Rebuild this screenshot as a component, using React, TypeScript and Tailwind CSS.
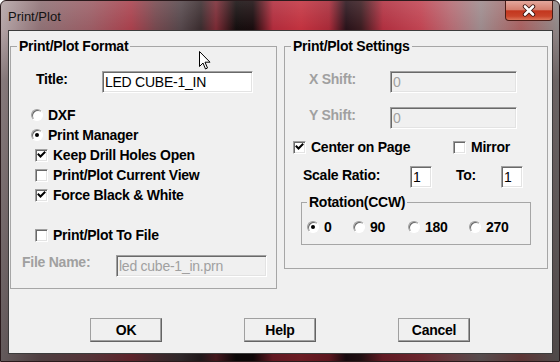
import React from "react"

function Check({ checked }: { checked?: boolean }) {
  return (
    <div className="w-[13px] h-[13px] shrink-0 flex items-center justify-center bg-white border border-[#a0a0a0] border-r-white border-b-white shadow-[inset_1px_1px_0_#696969,inset_-1px_-1px_0_#e3e3e3]">
      {checked && (
        <svg width="11" height="11" viewBox="0 0 11 11">
          <path d="M2.5 4.5 L4.5 6.5 L8.5 2.5" fill="none" stroke="#000" strokeWidth="2" strokeLinecap="square" />
        </svg>
      )}
    </div>
  )
}

function Radio({ checked }: { checked?: boolean }) {
  return (
    <div className="w-[12px] h-[12px] shrink-0 rounded-full flex items-center justify-center bg-white border border-[#a0a0a0] border-r-white border-b-white shadow-[inset_1px_1px_0_#696969]">
      {checked && <div className="w-[4px] h-[4px] rounded-full bg-black"></div>}
    </div>
  )
}

function TextBox({ className, disabled, children }: { className: string; disabled?: boolean; children: React.ReactNode }) {
  return (
    <div
      className={`h-[22px] shrink-0 flex items-center pl-[2px] font-normal border border-[#a0a0a0] border-r-white border-b-white shadow-[inset_1px_1px_0_#696969,inset_-1px_-1px_0_#e3e3e3] ${
        disabled ? "bg-[#f0f0f0] text-[#a0a0a0]" : "bg-white text-black"
      } ${className}`}
    >
      {children}
    </div>
  )
}

function CheckRow({ label, checked, className }: { label: string; checked?: boolean; className: string }) {
  return (
    <div className={`h-[20px] flex items-center gap-[5px] ${className}`}>
      <Check checked={checked} />
      <span>{label}</span>
    </div>
  )
}

function RadioRow({ label, checked, className }: { label: string; checked?: boolean; className: string }) {
  return (
    <div className={`h-[20px] flex items-center gap-[5px] ${className}`}>
      <Radio checked={checked} />
      <span>{label}</span>
    </div>
  )
}

function Button({ children }: { children: React.ReactNode }) {
  return (
    <div className="w-[72px] h-[24px] flex items-center justify-center bg-[#f0f0f0] border border-[#a0a0a0] border-r-[#646464] border-b-[#646464] shadow-[inset_-1px_-1px_0_#a0a0a0]">
      {children}
    </div>
  )
}

export default function App() {
  return (
    <div className="relative w-[560px] h-[362px] overflow-hidden rounded-t-[6px] border border-[#2a1a1c] flex flex-col pl-[7px] pr-[6px] pb-[7px] font-['Liberation_Sans',Arial,sans-serif] text-[14px] leading-[15px] tracking-[-0.25px] font-bold text-black bg-[linear-gradient(180deg,rgba(255,255,255,0.12)_0px,rgba(255,255,255,0)_28px,rgba(0,0,0,0.25)_80px,rgba(0,0,0,0.45)_100%),linear-gradient(90deg,#b4a4a6_0px,#8e7074_40px,#9a5c64_90px,#a8404c_130px,#74484e_155px,#54464a_180px,#3a2c2e_200px,#7a2a34_215px,#140e0e_235px,#1a0c0e_252px,#b02c3c_272px,#c2323f_300px,#a82a38_328px,#28121a_345px,#3a1c20_360px,#b03040_382px,#c04452_420px,#b46a72_450px,#9c8a8c_480px,#a86060_520px,#8c8a8a_560px)]">

      {/* title bar */}
      <div className="h-[29px] flex items-start justify-between">
        <span className="mt-[8px] font-normal text-[13px] tracking-normal text-[#111]">Print/Plot</span>
        <div className="w-[48px] h-[20px] flex items-center justify-center rounded-b-[4px] border border-t-0 border-[#4a1c16] bg-[linear-gradient(180deg,#e3a79c_0%,#d5806f_45%,#c3361e_52%,#c9452b_80%,#dc7458_100%)]">
          <svg width="16" height="13" viewBox="0 0 16 13">
            <path d="M4 2.5 L12 10.5 M12 2.5 L4 10.5" stroke="#3a1410" strokeWidth="4.4" strokeLinecap="round" />
            <path d="M4 2.5 L12 10.5 M12 2.5 L4 10.5" stroke="#fff" strokeWidth="2.6" strokeLinecap="round" />
          </svg>
        </div>
      </div>

      {/* client area */}
      <div className="flex-1 flex flex-col bg-[#f0f0f0] border border-[#3c3c3c]">

        <div className="mt-[8px] pl-[1px] flex items-start gap-[7px]">

          {/* Print/Plot Format */}
          <fieldset className="w-[267px] h-[250px] border border-[#a6a6a6]">
            <legend className="ml-[6px] px-[2px] leading-[15px]">Print/Plot Format</legend>

            <div className="mt-[17px] pl-[25px] flex items-start">
              <span className="w-[66px] pt-[1px]">Title:</span>
              <TextBox className="w-[151px]">LED CUBE-1_IN</TextBox>
            </div>

            <RadioRow className="mt-[12px] ml-[20px]" label="DXF" />
            <RadioRow className="ml-[20px]" label="Print Manager" checked />
            <CheckRow className="ml-[24px]" label="Keep Drill Holes Open" checked />
            <CheckRow className="ml-[24px]" label="Print/Plot Current View" />
            <CheckRow className="ml-[24px]" label="Force Black & White" checked />

            <CheckRow className="mt-[20px] ml-[24px]" label="Print/Plot To File" />

            <div className="mt-[10px] pl-[11px] flex items-start">
              <span className="w-[94px] text-[#a0a0a0]">File Name:</span>
              <TextBox className="w-[151px]" disabled>led cube-1_in.prn</TextBox>
            </div>
          </fieldset>

          {/* Print/Plot Settings */}
          <fieldset className="w-[264px] h-[230px] border border-[#a6a6a6]">
            <legend className="ml-[6px] px-[2px] leading-[15px]">Print/Plot Settings</legend>

            <div className="mt-[17px] pl-[24px] flex items-start">
              <span className="w-[81px] pt-[1px] text-[#a0a0a0]">X Shift:</span>
              <TextBox className="w-[127px]" disabled>0</TextBox>
            </div>

            <div className="mt-[14px] pl-[24px] flex items-start">
              <span className="w-[81px] pt-[1px] text-[#a0a0a0]">Y Shift:</span>
              <TextBox className="w-[127px]" disabled>0</TextBox>
            </div>

            <div className="mt-[8px] pl-[8px] flex items-center">
              <CheckRow className="w-[160px]" label="Center on Page" checked />
              <CheckRow className="" label="Mirror" />
            </div>

            <div className="mt-[9px] pl-[18px] flex items-start">
              <span className="w-[107px] pt-[2px]">Scale Ratio:</span>
              <TextBox className="w-[22px]">1</TextBox>
              <span className="ml-[24px] w-[45px] pt-[2px]">To:</span>
              <TextBox className="w-[22px]">1</TextBox>
            </div>

            <fieldset className="mt-[7px] ml-[16px] w-[230px] h-[50px] border border-[#a6a6a6]">
              <legend className="ml-[5px] px-[2px] leading-[15px]">Rotation(CCW)</legend>
              <div className="mt-[7px] pl-[5px] flex items-center">
                <RadioRow className="w-[46px]" label="0" checked />
                <RadioRow className="w-[55px]" label="90" />
                <RadioRow className="w-[61px]" label="180" />
                <RadioRow className="" label="270" />
              </div>
            </fieldset>
          </fieldset>

        </div>

        {/* buttons */}
        <div className="mt-[29px] pl-[81px] flex items-center gap-[82px]">
          <Button>OK</Button>
          <Button>Help</Button>
          <Button>Cancel</Button>
        </div>

      </div>

      {/* mouse pointer */}
      <svg className="absolute left-[198px] top-[50px]" width="13" height="20" viewBox="0 0 13 20">
        <path d="M0.5 0.5 L0.5 15.5 L4 12 L6.5 18 L8.5 17 L6 11.2 L11 11.2 Z" fill="#fff" stroke="#000" strokeWidth="1" strokeLinejoin="miter" />
      </svg>
    </div>
  )
}
